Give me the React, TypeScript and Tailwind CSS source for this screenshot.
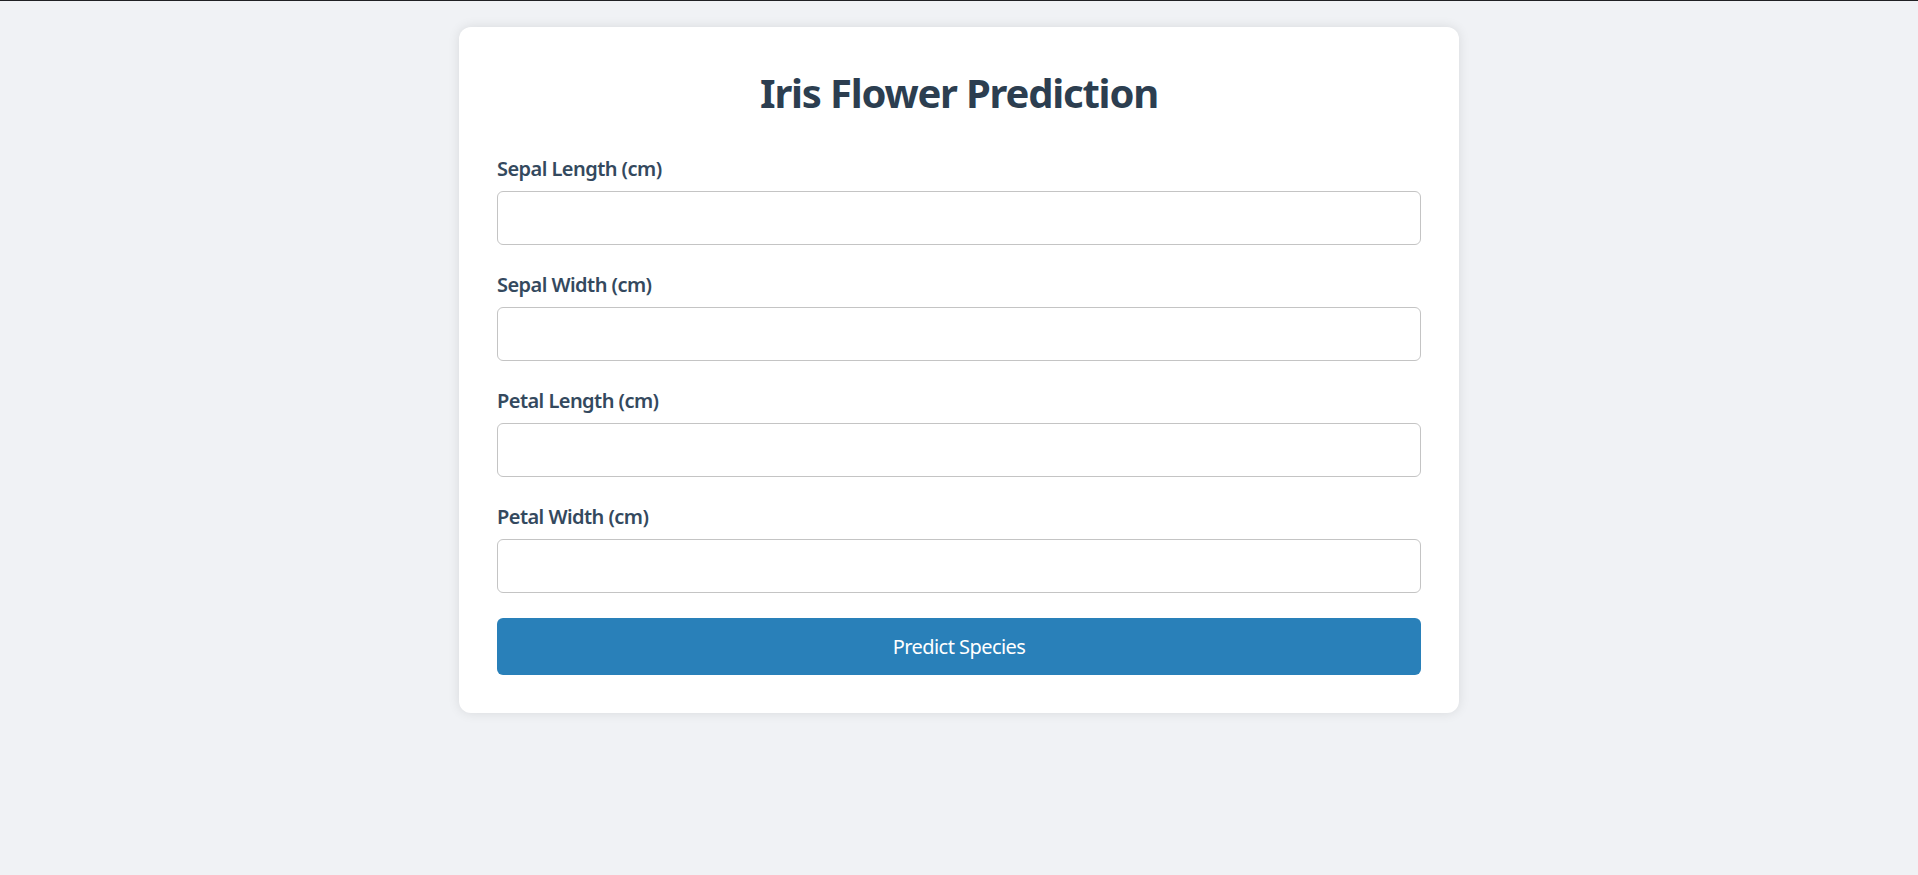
import { useState } from "react"

const FIELDS = [
  { id: "sepal_length", label: "Sepal Length (cm)" },
  { id: "sepal_width", label: "Sepal Width (cm)" },
  { id: "petal_length", label: "Petal Length (cm)" },
  { id: "petal_width", label: "Petal Width (cm)" },
]

export default function App() {
  const [values, setValues] = useState<Record<string, string>>({})

  return (
    <div
      className="min-h-[875px] bg-[#f0f2f5] border-t border-[#202124] pt-[26px]"
      style={{ fontFamily: '"Noto Sans", "Open Sans", sans-serif' }}
    >
      <div className="mx-auto w-[1000px] bg-white rounded-[12px] px-[38px] pt-[39px] pb-[38px] shadow-[0_0_12px_rgba(0,0,0,0.1)]">
        <h1 className="text-center text-[40px] leading-[53px] font-bold tracking-[-1.2px] text-[#2c3e50] mb-[35px]">
          Iris Flower Prediction
        </h1>

        <form onSubmit={(e) => e.preventDefault()}>
          {FIELDS.map((f) => (
            <div key={f.id} className="mb-[25px]">
              <label
                htmlFor={f.id}
                className="block pt-[1px] text-[20px] leading-[27px] font-semibold tracking-[-0.55px] text-[#34495e] mb-[9px]"
              >
                {f.label}
              </label>
              <input
                id={f.id}
                type="number"
                step="any"
                value={values[f.id] ?? ""}
                onChange={(e) => setValues({ ...values, [f.id]: e.target.value })}
                className="block w-full h-[54px] px-[12px] text-[20px] border border-[#c4c4c4] rounded-[6px] bg-white outline-none"
              />
            </div>
          ))}

          <button
            type="submit"
            className="block w-full h-[57px] bg-[#2980b9] text-white text-[20px] tracking-[-0.55px] rounded-[6px]"
          >
            Predict Species
          </button>
        </form>
      </div>
    </div>
  )
}
